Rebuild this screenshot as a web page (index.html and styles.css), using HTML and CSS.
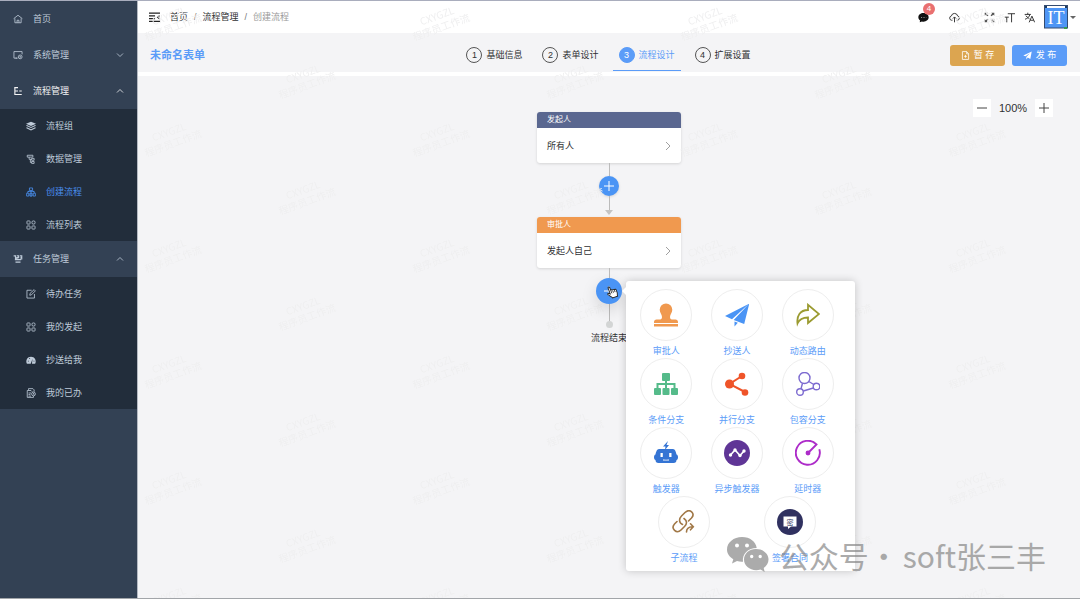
FILE: index.html
```html
<!DOCTYPE html>
<html lang="zh-CN">
<head>
<meta charset="utf-8">
<title>创建流程</title>
<link rel="stylesheet" href="styles.css">
</head>
<body>
<div class="app">
  <aside class="sidebar">
    <nav class="menu">
      <a class="menu-item" href="#"><svg class="icon" viewBox="0 0 16 16"><path d="M1 7.500 8 2l7 5.500M3 7v7h10V7M6.500 14v-4h3v4"/></svg><span>首页</span></a>
      <a class="menu-item" href="#"><svg class="icon" viewBox="0 0 16 16"><path d="M7 13H1.500V2.500h13V7M4 13h3"/><circle cx="11.500" cy="11" r="3"/><circle cx="11.500" cy="11" r=".8"/></svg><span>系统管理</span><svg class="chevron" viewBox="0 0 8 8"><path d="M1 2.500 4 5.500 7 2.500"/></svg></a>
      <a class="menu-item open" href="#"><svg class="icon bold" viewBox="0 0 16 16"><path d="M2 2.500h6M3 2.500v11h11M3 8h5M10 8h4M9 13.500h5"/></svg><span>流程管理</span><svg class="chevron" viewBox="0 0 8 8"><path d="M1 5.500 4 2.500 7 5.500"/></svg></a>
      <div class="submenu">
        <a class="menu-item" href="#"><svg class="icon solid" viewBox="0 0 16 16"><path d="M8 1 16 4.500 8 8 0 4.500zM1.500 6.500 8 9.500l6.500-3L16 7.700 8 11.300 0 7.700zM1.500 10 8 13l6.500-3L16 11.200 8 15 0 11.200z"/></svg><span>流程组</span></a>
        <a class="menu-item" href="#"><svg class="icon" viewBox="0 0 16 16"><path d="M2 2h9v3H2zM5 5v3.500h4M7 8.500v5h2M9 7h4v3H9zM9 12h4v3H9z"/></svg><span>数据管理</span></a>
        <a class="menu-item active" href="#"><svg class="icon" viewBox="0 0 16 16"><path d="M5.500 1.500h5v4h-5zM8 5.500V15M3 9V7h10v2M1 10h3.500v4.500H1zM6.200 10h3.600v4.500H6.200zM11.500 10H15v4.500h-3.500zM5 6 2 9M11 6l3 3"/></svg><span>创建流程</span></a>
        <a class="menu-item" href="#"><svg class="icon" viewBox="0 0 16 16"><rect x="1.500" y="1.500" width="5" height="5" rx="1"/><rect x="9.500" y="1.500" width="5" height="5" rx="2"/><rect x="1.500" y="9.500" width="5" height="5" rx="1"/><rect x="9.500" y="9.500" width="5" height="5" rx="1"/></svg><span>流程列表</span></a>
      </div>
      <a class="menu-item" href="#"><svg class="icon bold" viewBox="0 0 16 16"><path d="M1 3h3v5M6 3h3v2.500H6V8h3M11 3h3v5h-3M12 5.500h2M3 9h10M4 13h8"/></svg><span>任务管理</span><svg class="chevron" viewBox="0 0 8 8"><path d="M1 5.500 4 2.500 7 5.500"/></svg></a>
      <div class="submenu">
        <a class="menu-item" href="#"><svg class="icon" viewBox="0 0 16 16"><path d="M9 2H1.500v12.500h12V8M6 10l.5-3 6.500-6 2 2-6.500 6.500z"/></svg><span>待办任务</span></a>
        <a class="menu-item" href="#"><svg class="icon" viewBox="0 0 16 16"><rect x="1.500" y="1.500" width="5" height="5" rx="1"/><rect x="9.500" y="1.500" width="5" height="5" rx="2"/><rect x="1.500" y="9.500" width="5" height="5" rx="1"/><rect x="9.500" y="9.500" width="5" height="5" rx="1"/></svg><span>我的发起</span></a>
        <a class="menu-item" href="#"><svg class="icon solid" viewBox="0 0 16 16"><path fill-rule="evenodd" d="M1.500 14A7.500 7.500 0 1 1 14.500 14H9.500l1-8-3 8zM3 9v1.500h1.500V9zM5 5v1.500h1.500V5zM12 9v1.500h1.500V9z"/></svg><span>抄送给我</span></a>
        <a class="menu-item" href="#"><svg class="icon" viewBox="0 0 16 16"><path d="M4 3V1h7l2 2v3M2 4h6l2 2M2 4v11h10v-2M4 8h4M4 10.500h3M4 13h4"/><circle cx="12" cy="9.500" r="3"/><path d="M12 8v2h1.500"/></svg><span>我的已办</span></a>
      </div>
    </nav>
  </aside>

  <main class="main">
    <header class="topbar">
      <button class="icon-button" aria-label="收起菜单"><svg class="fold" viewBox="0 0 20 18"><path d="M0 2h20M0 7h11M0 12h11M0 17h20" /><path class="fold-arrow" d="M19 5.500v8l-5-4z"/></svg></button>
      <nav class="breadcrumb"><a href="#">首页</a><i>/</i><a href="#">流程管理</a><i>/</i><span>创建流程</span></nav>
      <div class="tools">
        <button class="icon-button message" aria-label="消息"><svg class="tool" viewBox="0 0 16 16"><path fill="#111" d="M8 1.500c4.300 0 7.500 2.700 7.500 6.200S12.300 14 8 14c-.8 0-1.500-.1-2.200-.3L2.500 15l.5-2.600C1.400 11.300.5 9.600.5 7.700.5 4.200 3.700 1.500 8 1.500z"/><path stroke="#999" stroke-width="1.500" stroke-dasharray="1.500 2" d="M4.500 8H12"/></svg><span class="badge">4</span></button>
        <button class="icon-button cloud" aria-label="上传"><svg class="tool outline" viewBox="0 0 16 16"><path d="M5 12H3.800A3.200 3.200 0 0 1 3.500 5.700 4.600 4.600 0 0 1 12.500 5.700 3.200 3.200 0 0 1 12.200 12H11M8 15V7.500M5.700 9.500 8 7.200l2.300 2.300"/></svg></button>
        <button class="icon-button full" aria-label="全屏"><svg class="tool" viewBox="0 0 16 16"><path fill="#555" d="M1 1h4.500L4.100 2.400 6.500 4.800 5 6.300 2.600 3.900 1 5.500zM15 1v4.500l-1.600-1.600L11 6.300 9.500 4.800l2.400-2.400L10.500 1zM1 15v-4.500l1.600 1.600L5 9.700l1.500 1.500-2.400 2.400L5.500 15zM15 15h-4.500l1.400-1.400-2.400-2.400L11 9.700l2.400 2.400 1.600-1.600z"/></svg></button>
        <button class="icon-button" aria-label="字号"><svg class="tool outline" viewBox="0 0 16 16"><path d="M5.500 2.500H16M11 2.500V15M1 7.500h6M4 7.500V15"/></svg></button>
        <button class="icon-button lang" aria-label="语言"><svg class="tool outline" viewBox="0 0 16 16"><path d="M1 3.500h9M5.500 1v2.500M2.500 5.500 8 10M8.500 3.500C8 7 5 9.500 1.500 10.500M7.500 15 11.500 6l4 9M9 12h5"/></svg></button>
        <button class="profile" aria-label="账户"><svg class="avatar" viewBox="0 0 24 24"><rect x=".5" y=".5" width="23" height="22.500" fill="#4e95f5" stroke="#344b70"/><path d="M3 2h18" stroke="#fff" stroke-width="2"/><path d="M1 1h2v2H1zM21 1h2v2h-2z" fill="#1f3c60"/><text x="12" y="18.500" text-anchor="middle">IT</text><path d="M20 23h3" stroke="#3b9c4d" stroke-width="2"/></svg><span class="caret"></span></button>
      </div>
    </header>

    <section class="formbar">
      <h1>未命名表单</h1>
      <nav class="steps">
        <button class="step"><b>1</b>基础信息</button>
        <button class="step"><b>2</b>表单设计</button>
        <button class="step current"><b>3</b>流程设计</button>
        <button class="step"><b>4</b>扩展设置</button>
      </nav>
      <div class="actions">
        <button class="action save"><svg viewBox="0 0 16 16"><path d="M2.500 1h7.500l3.500 3.500V15h-11zM10 1v4h3.500M8 7v5M5.500 9.500h5" fill="none" stroke="#fff" stroke-width="1.400"/></svg>暂 存</button>
        <button class="action publish"><svg viewBox="0 0 16 16"><path fill="#fff" d="M15.500 1 13 14l-4.500-2.500L6 15v-4.500L12 4 4.500 9.500.5 8z"/></svg>发 布</button>
      </div>
    </section>

    <section class="canvas">
      <div class="zoom"><button aria-label="缩小"><svg viewBox="0 0 10 10"><path d="M0 5h10"/></svg></button><output>100%</output><button aria-label="放大"><svg viewBox="0 0 10 10"><path d="M0 5h10M5 0v10"/></svg></button></div>
      <div class="flow">
        <article class="node start"><h2>发起人</h2><button class="node-body">所有人<svg viewBox="0 0 8 8"><path d="M2 0 6 4 2 8"/></svg></button></article>
        <div class="connector">
          <span class="line"></span>
          <button class="add" aria-label="添加节点"><svg viewBox="0 0 10 10"><path d="M0 5h10M5 0v10"/></svg></button>
          <span class="line grow"></span><span class="arrow"></span>
        </div>
        <article class="node approve"><h2>审批人</h2><button class="node-body">发起人自己<svg viewBox="0 0 8 8"><path d="M2 0 6 4 2 8"/></svg></button></article>
        <div class="connector tail">
          <span class="line"></span>
          <div class="anchor">
            <button class="add hover" aria-label="添加节点"><svg viewBox="0 0 10 10"><path d="M0 5h10M5 0v10"/></svg></button>
            <svg class="hand" viewBox="0 0 24 24"><g transform="rotate(-20 12 12)"><path d="M8 14V3.500c0-2 3-2 3 0V9c.5-1.500 3-1.200 3 .4.600-1.300 3-1 3 .5.700-1 3-.6 3 1V16c0 2-1.500 3-1.500 6H9.500c0-2-3-4-5.500-8-.8-1.800 1.200-2.800 2.500-1.300z" fill="#fff" stroke="#222" stroke-width="1.600"/><path d="M11 9v5M14 10v4M17 11v3" stroke="#222" stroke-width="1.300"/></g></svg>
            <div class="picker">
              <button class="kind"><span><svg viewBox="0 0 24 24" fill="#f0994f"><path d="M12 .5a6.300 6.300 0 0 1 6.300 6.300c0 3-2.300 4.700-2.300 7.200 0 2 1 2.500 3 2.500h2.500c1.500 0 2.500 1 2.500 2.500v1H0v-1c0-1.500 1-2.500 2.500-2.500H5c2 0 3-.5 3-2.500 0-2.500-2.300-4.200-2.300-7.200A6.300 6.300 0 0 1 12 .5zM0 21h24v2.500H0z"/></svg></span>审批人</button>
              <button class="kind"><span><svg viewBox="0 0 24 24" fill="#4a94f5"><path d="M24.300.5 0 13l7 3.300zM24.300.5 8.700 17l10.500 4zM9.500 18.500v5l3.300-3.700z"/></svg></span>抄送人</button>
              <button class="kind"><span><svg viewBox="0 0 24 24" fill="none" stroke="#9b9b31" stroke-width="1.800"><path d="M12 7V1.800L23 11 12 20v-5.500C7 14.500 3.500 16 1.500 20.500 .5 13 4 7 12 7z"/></svg></span>动态路由</button>
              <button class="kind"><span><svg viewBox="0 0 24 24" fill="#55bb8a"><rect x="8" y="1" width="8" height="8" rx="1"/><path d="M11 8h2v8h-2zM2.500 11h19v5h-2v-3h-15v3h-2z"/><rect y="16" width="7" height="7" rx="1"/><rect x="8.500" y="16" width="7" height="7" rx="1"/><rect x="17" y="16" width="7" height="7" rx="1"/></svg></span>条件分支</button>
              <button class="kind"><span><svg viewBox="0 0 24 24" fill="#ef5429"><path d="M20 20 4.500 12 17 4" fill="none" stroke="#ef5429" stroke-width="2"/><circle cx="4.500" cy="12" r="4.500"/><circle cx="17" cy="4" r="3.300"/><circle cx="20" cy="20.500" r="3.300"/></svg></span>并行分支</button>
              <button class="kind"><span><svg viewBox="0 0 24 24" fill="none" stroke="#7d6bd0" stroke-width="1.400"><circle cx="8.500" cy="6" r="5.500"/><circle cx="20.500" cy="14.500" r="3.300"/><circle cx="4" cy="20" r="3.300"/><path d="M6.500 11.200 5 16.800M12.800 9.500l5 3M7.300 19l10-3"/></svg></span>包容分支</button>
              <button class="kind"><span><svg viewBox="0 0 24 24" fill="#3474d4"><path d="m14 0-5 5.500h2.500L11 9l4-5h-2.500z"/><path fill-rule="evenodd" d="M5 8h14c2 0 3 3 3.500 5.500 2 .5 2 5 0 5.500 0 2-1 3-3 3h-15c-2 0-3-1-3-3-2-.500-2-5 0-5.500C2 11 3 8 5 8zm1.500 4v4h2.300v-4zM15.200 12v4h2.300v-4zM9 18.500v1h6v-1l-3 .3z"/></svg></span>触发器</button>
              <button class="kind"><span><svg class="large" viewBox="0 0 26 26"><circle cx="13" cy="13" r="13" fill="#5f3596"/><path d="M6.500 15 11 10l5 5.500L20 11" fill="none" stroke="#fff" stroke-width="1.600"/><g fill="#fff"><circle cx="6.500" cy="15" r="1.700"/><circle cx="11" cy="10" r="1.700"/><circle cx="16" cy="15.500" r="1.700"/><circle cx="20" cy="11" r="1.700"/></g></svg></span>异步触发器</button>
              <button class="kind"><span><svg class="large" viewBox="0 0 26 26" fill="none" stroke="#ad2cc9" stroke-width="1.900"><path d="M24.300 9.300A12 12 0 1 1 21.500 4.500L13 13"/><circle cx="13" cy="13" r="1.500" fill="#ad2cc9"/></svg></span>延时器</button>
              <button class="kind"><span><svg viewBox="0 0 24 24" fill="none" stroke="#a17847" stroke-width="1.600" stroke-linecap="round"><path d="M10.500 14.500C6.500 12.500 7 8.500 9.500 6l3.500-3.500c5-4.500 10.500 1 6.500 5.500L16.500 11M12 8.500c3.500 2.500 3 5.500.5 8L9 20C4.500 24.500-1.500 18.500 2.500 14L5 11.500M14.500 22c0-3.500 1.500-5 6-5.200M18.500 13.800l2.800 3-2.800 3"/></svg></span>子流程</button>
              <button class="kind"><span><svg class="large" viewBox="0 0 26 26"><circle cx="13" cy="13" r="13" fill="#303160"/><path d="M6.500 7.500h13v10H14l-3 2.500v-2.500H6.500z" fill="#fff"/><text class="seal" x="13" y="15.500" text-anchor="middle">密</text></svg></span>签署合同</button>
            </div>
          </div>
          <span class="line grow"></span><span class="dot"></span>
        </div>
        <p class="end">流程结束</p>
      </div>
    </section>

    <svg class="watermark" aria-hidden="true">
      <defs><pattern id="mark" x="-99" y="-32" width="268" height="116" patternUnits="userSpaceOnUse">
        <g transform="translate(134 58) rotate(-20)"><text y="-8">CXYGZL</text><text y="4">程序员工作流</text></g>
        <g transform="translate(0 0) rotate(-20)"><text y="-8">CXYGZL</text><text y="4">程序员工作流</text></g>
        <g transform="translate(268 0) rotate(-20)"><text y="-8">CXYGZL</text><text y="4">程序员工作流</text></g>
        <g transform="translate(0 116) rotate(-20)"><text y="-8">CXYGZL</text><text y="4">程序员工作流</text></g>
        <g transform="translate(268 116) rotate(-20)"><text y="-8">CXYGZL</text><text y="4">程序员工作流</text></g>
      </pattern></defs>
      <rect width="100%" height="100%" fill="url(#mark)"/>
    </svg>
    <div class="signature"><svg viewBox="0 0 42 36"><path fill-rule="evenodd" d="M15 0c8 0 14 4.800 14.700 11C21 11 15 17 16 24.700c-2 .2-4-.1-6-.7L5 26.500l1.300-4.300C2.500 20 0 16.500 0 12.500 0 5.500 6.700 0 15 0zM10 6.500a2 2 0 1 0 0 4 2 2 0 0 0 0-4zm10 0a2 2 0 1 0 0 4 2 2 0 0 0 0-4z"/><path fill-rule="evenodd" d="M29 12c7.200 0 12.500 4.700 12.500 10.500 0 3.500-1.900 6.500-4.800 8.400l1 4-4.200-2.300c-8.700 2.400-16.500-2.800-16.500-10C17 16.700 22 12 29 12zm-4.300 5.800a1.700 1.700 0 1 0 0 3.400 1.700 1.700 0 0 0 0-3.400zm8.500 0a1.700 1.700 0 1 0 0 3.400 1.700 1.700 0 0 0 0-3.400z"/></svg><span>公众号</span><span class="separator">·</span><span>soft张三丰</span></div>
  </main>
</div>
</body>
</html>
```

FILE: styles.css
```css
* { box-sizing: border-box; }
body {
  margin: 0;
  font: 9px/16px "Liberation Sans", "Noto Sans CJK SC", sans-serif;
  color: #303133;
}
button {
  font: inherit;
  color: inherit;
  border: 0;
  padding: 0;
  background: none;
  cursor: pointer;
}
a { color: inherit; text-decoration: none; }
svg { display: block; flex: none; }
.app {
  display: flex;
  min-height: 100vh;
  border-top: 1px solid #a9adbd;
  border-bottom: 1px solid #a2a5a9;
}

.sidebar {
  flex: 0 0 138px;
  background: #334154;
  border-right: 1px solid #b4b9c2;
  color: #bfcbd9;
}
.menu-item {
  display: flex;
  align-items: center;
  gap: 10px;
  height: 36px;
  padding: 0 13px;
}
.submenu {
  display: grid;
  gap: 1px;
  padding-top: 1px;
  background: #222d3b;
}
.submenu .menu-item { height: 32px; padding-left: 26px; }
.menu-item.open { color: #f4f4f5; }
.menu-item.active { color: #4a90f0; }
.icon { width: 10px; height: 10px; fill: none; stroke: currentColor; stroke-width: 1.300; }
.icon.bold { stroke-width: 1.800; }
.icon.solid { fill: currentColor; stroke: none; }
.chevron { width: 8px; height: 8px; margin-left: auto; fill: none; stroke: currentColor; stroke-width: .8; }

.main {
  position: relative;
  display: flex;
  flex: 1;
  flex-direction: column;
  min-width: 0;
  overflow: hidden;
  background: #f4f4f6;
}
.topbar {
  display: flex;
  align-items: center;
  height: 32px;
  padding: 0 4px 0 11px;
  background: #fff;
}
.fold { width: 11px; height: 10px; fill: none; stroke: #222; stroke-width: 2; }
.fold-arrow { fill: #222; stroke: none; }
.breadcrumb { display: flex; gap: 6px; margin-left: 10px; }
.breadcrumb i { color: #777; font-style: normal; }
.breadcrumb span { color: #999; }
.tools { display: flex; align-items: center; margin-left: auto; }
.icon-button { position: relative; display: flex; }
.tool { width: 11px; height: 11px; fill: none; }
.tool.outline { stroke: #333; stroke-width: 1.400; }
.message { margin-right: 20px; }
.cloud { margin-right: 24px; }
.full { margin-right: 9px; }
.lang { margin: 0 9px; }
.badge {
  position: absolute;
  top: -9px;
  right: -6px;
  width: 12px;
  border-radius: 6px;
  background: #e97070;
  color: #fff;
  font-size: 8px;
  line-height: 12px;
}
.profile { display: flex; align-items: center; gap: 2px; }
.avatar { width: 24px; height: 24px; }
.avatar text { font: 18px "Liberation Serif", serif; fill: #fff; }
.caret { border: 3px solid transparent; border-top-color: #666; border-bottom: 0; }

.formbar {
  display: grid;
  grid-template-columns: 1fr auto 1fr;
  align-items: center;
  height: 43px;
  padding: 5px 13px 0 12px;
  border-bottom: 4px solid #fff;
}
.formbar h1 { margin: 0; font-size: 11px; line-height: 16px; color: #5b9cf8; }
.steps { display: flex; gap: 8px; }
.step {
  display: flex;
  align-items: center;
  gap: 4px;
  height: 31px;
  padding: 0 6px;
  border-bottom: 1px solid transparent;
}
.step b {
  width: 16px;
  border: 1px solid #555;
  border-radius: 8px;
  font-weight: 400;
  line-height: 14px;
}
.step.current { color: #5b9cf8; border-color: #5b9cf8; }
.step.current b { border-color: #5b9cf8; background: #5b9cf8; color: #fff; }
.actions { display: flex; justify-content: flex-end; gap: 7px; }
.action {
  display: flex;
  align-items: center;
  justify-content: center;
  gap: 4px;
  width: 55px;
  height: 21px;
  border-radius: 3px;
  color: #fff;
}
.action svg { width: 9px; height: 9px; }
.save { background: #dca550; }
.publish { background: #5b9cf8; }

.canvas { position: relative; flex: 1; padding-top: 36px; }
.zoom {
  position: absolute;
  top: 23px;
  right: 27px;
  display: flex;
  align-items: center;
  font-size: 11px;
}
.zoom output { width: 44px; text-align: center; }
.zoom button { padding: 4px; background: #fff; }
.zoom svg { width: 10px; height: 10px; stroke: #444; }
.flow { display: flex; flex-direction: column; align-items: center; }
.node {
  width: 144px;
  border-radius: 3px;
  overflow: hidden;
  background: #fff;
  box-shadow: 0 1px 3px #0002;
}
.node h2 { margin: 0; padding-left: 10px; font-size: 8px; font-weight: 400; line-height: 16px; color: #fff; }
.start h2 { background: #5a6790; }
.approve h2 { background: #f0994f; }
.node-body {
  display: flex;
  align-items: center;
  justify-content: space-between;
  width: 100%;
  height: 35px;
  padding: 0 9px 0 10px;
}
.node-body svg { width: 8px; height: 8px; fill: none; stroke: #888; stroke-width: .8; }
.connector { display: flex; flex-direction: column; align-items: center; height: 54px; padding-bottom: 2px; }
.tail { height: 60px; padding: 0; }
.line { width: 1px; height: 13px; background: #bbb; }
.tail .line { height: 10px; }
.connector .grow { flex: 1; }
.arrow { border: 4px solid transparent; border-top: 5px solid #c4c4c4; border-bottom: 0; }
.dot { width: 7px; height: 7px; border-radius: 50%; background: #d3d5d5; }
.add {
  display: grid;
  place-items: center;
  width: 20px;
  height: 20px;
  border-radius: 50%;
  background: #4a94f5;
  box-shadow: 0 1px 3px #0002;
}
.add svg { width: 10px; height: 10px; stroke: #fff; }
.add.hover { width: 26px; height: 26px; box-shadow: 0 6px 16px #0002; }
.anchor { position: relative; z-index: 3; }
.hand { position: absolute; top: 7px; left: 9px; width: 14px; height: 14px; fill: none; }
.end { margin: 2px 0 0; }
.picker {
  position: absolute;
  top: 3px;
  left: 30px;
  display: flex;
  flex-wrap: wrap;
  justify-content: space-around;
  width: 229px;
  padding: 8px 12px 6px 5px;
  border-radius: 3px;
  background: #fff;
  box-shadow: 0 0 8px #0003;
}
.picker::before {
  content: "";
  position: absolute;
  top: 5px;
  left: -4px;
  border: 5px solid transparent;
  border-right-color: #fff;
  border-left: 0;
}
.kind {
  display: flex;
  flex-direction: column;
  align-items: center;
  gap: 3px;
  width: 70px;
  line-height: 14px;
  color: #5b9cf8;
}
.kind span { display: grid; place-items: center; width: 52px; height: 52px; border: 1px solid #eee; border-radius: 50%; }
.kind svg { width: 24px; height: 24px; }
.kind .large { width: 26px; height: 26px; }
.seal { font: 7px "Noto Sans CJK SC", sans-serif; fill: #303160; }

.watermark {
  position: absolute;
  inset: 0;
  z-index: 2;
  width: 100%;
  height: 100%;
  pointer-events: none;
  font: 10px "Noto Sans CJK SC", sans-serif;
  fill: #efeff0;
  text-anchor: middle;
}
.signature {
  position: absolute;
  right: 34px;
  bottom: 23px;
  z-index: 4;
  display: flex;
  align-items: center;
  font: 30px/40px "Noto Sans CJK SC", sans-serif;
  color: #888;
  opacity: .7;
  pointer-events: none;
}
.signature svg { width: 42px; height: 36px; margin-right: 10px; fill: #888; }
.separator { margin-right: 4px; }
```
